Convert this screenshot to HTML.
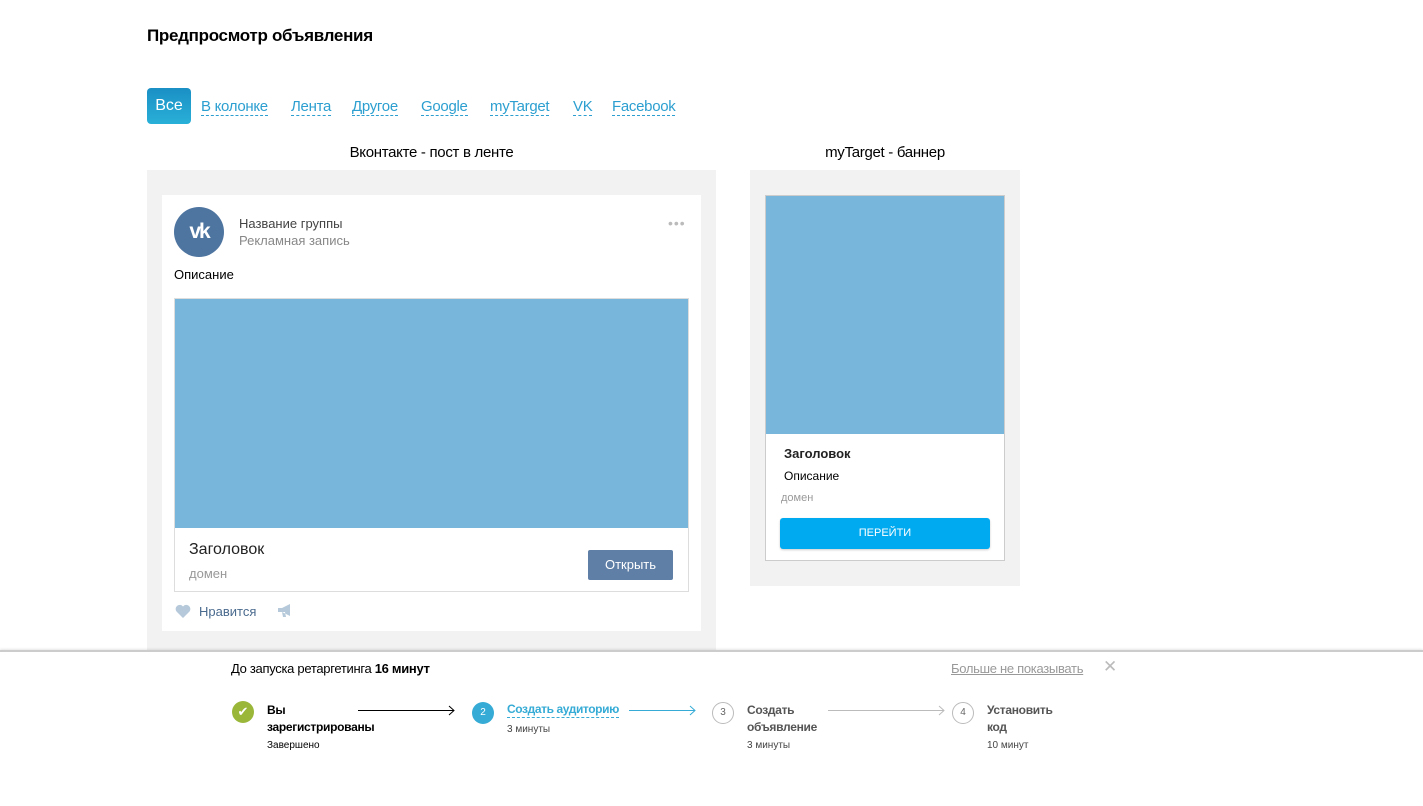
<!DOCTYPE html>
<html><head><meta charset="utf-8"><style>
*{margin:0;padding:0;box-sizing:border-box}
body{width:1423px;height:806px;background:#fff;font-family:"Liberation Sans","DejaVu Sans",sans-serif;position:relative;overflow:hidden;color:#000}
.a{position:absolute;white-space:nowrap}
.tab{position:absolute;top:98px;font-size:15px;color:#2c9fd0;border-bottom:1px dashed #2c9fd0;line-height:17px;letter-spacing:-0.3px}
</style></head><body>
<div class="a" style="left:147px;top:26px;font-size:17px;font-weight:bold;letter-spacing:-0.3px">Предпросмотр объявления</div>
<div class="a" style="left:147px;top:88px;width:44px;height:36px;border-radius:4px;background:linear-gradient(#1a8fc4,#29b0d8);color:#fff;font-size:16px;line-height:36px;text-align:center">Все</div>
<span class="tab" style="left:201px">В колонке</span>
<span class="tab" style="left:291px">Лента</span>
<span class="tab" style="left:352px">Другое</span>
<span class="tab" style="left:421px">Google</span>
<span class="tab" style="left:490px">myTarget</span>
<span class="tab" style="left:573px">VK</span>
<span class="tab" style="left:612px">Facebook</span>

<div class="a" style="left:147px;top:144px;width:569px;text-align:center;font-size:15px;letter-spacing:-0.3px">Вконтакте - пост в ленте</div>
<div class="a" style="left:147px;top:170px;width:569px;height:490px;background:#f2f2f2"></div>
<div class="a" style="left:162px;top:195px;width:539px;height:436px;background:#fff"></div>
<div class="a" style="left:174px;top:207px;width:50px;height:50px;border-radius:50%;background:#4e74a0;color:#fff;font-weight:bold;font-size:21px;text-align:center;line-height:50px;letter-spacing:-2px">vk</div>
<div class="a" style="left:239px;top:216px;font-size:13px;color:#444">Название группы</div>
<div class="a" style="left:239px;top:233px;font-size:13px;color:#888">Рекламная запись</div>
<div class="a" style="left:668px;top:215px;font-size:14px;color:#bbb;letter-spacing:1px">•••</div>
<div class="a" style="left:174px;top:267px;font-size:13px">Описание</div>
<div class="a" style="left:174px;top:298px;width:515px;height:294px;border:1px solid #ddd;background:#fff"></div>
<div class="a" style="left:175px;top:299px;width:513px;height:229px;background:#78b6dc"></div>
<div class="a" style="left:189px;top:541px;font-size:16px;color:#222">Заголовок</div>
<div class="a" style="left:189px;top:566px;font-size:13px;color:#999">домен</div>
<div class="a" style="left:588px;top:550px;width:85px;height:30px;background:#5f7fa6;border-radius:2px;color:#fff;font-size:13px;text-align:center;line-height:30px">Открыть</div>
<svg class="a" style="left:175px;top:604px" width="16" height="14" viewBox="0 0 16 14"><path d="M8 14L1.5 7.5A4 4 0 0 1 8 2.5A4 4 0 0 1 14.5 7.5z" fill="#b5c9da"/></svg>
<div class="a" style="left:199px;top:604px;font-size:13px;color:#4a6a8e">Нравится</div>
<svg class="a" style="left:277px;top:603px" width="16" height="15" viewBox="0 0 16 15"><path d="M1 5h4l8-4v12l-8-4H1z M5 9l1 5h3l-1-5z" fill="#b5c9da"/></svg>

<div class="a" style="left:750px;top:144px;width:270px;text-align:center;font-size:15px;letter-spacing:-0.3px">myTarget - баннер</div>
<div class="a" style="left:750px;top:170px;width:270px;height:416px;background:#f2f2f2"></div>
<div class="a" style="left:765px;top:195px;width:240px;height:366px;background:#fff;border:1px solid #ccc"></div>
<div class="a" style="left:766px;top:196px;width:238px;height:238px;background:#78b6dc"></div>
<div class="a" style="left:784px;top:446px;font-size:13px;font-weight:bold;color:#222">Заголовок</div>
<div class="a" style="left:784px;top:469px;font-size:12px">Описание</div>
<div class="a" style="left:781px;top:492px;font-size:11px;color:#999">домен</div>
<div class="a" style="left:780px;top:518px;width:210px;height:31px;background:#00aaf0;border-radius:3px;color:#fff;font-size:11px;text-align:center;line-height:31px;box-shadow:0 1px 2px rgba(0,0,0,.2)">ПЕРЕЙТИ</div>

<div class="a" style="left:0;top:650px;width:1423px;height:156px;background:#fff;border-top:2px solid #ccc;box-shadow:0 -1px 2px rgba(0,0,0,.1)"></div>
<div class="a" style="left:231px;top:661px;font-size:13px;letter-spacing:-0.3px">До запуска ретаргетинга <b>16 минут</b></div>
<div class="a" style="left:951px;top:661px;font-size:13px;color:#999;text-decoration:underline;letter-spacing:-0.3px">Больше не показывать</div>
<div class="a" style="left:1103px;top:657px;font-size:17px;color:#bbb">✕</div>

<div class="a" style="left:232px;top:701px;width:22px;height:22px;border-radius:50%;background:#9ab73a;color:#fff;font-size:13px;text-align:center;line-height:22px">✔</div>
<div class="a" style="left:267px;top:702px;font-size:12px;font-weight:bold;line-height:17px;letter-spacing:-0.3px">Вы<br>зарегистрированы</div>
<div class="a" style="left:267px;top:740px;font-size:10px">Завершено</div>
<svg class="a" style="left:358px;top:705px" width="98" height="11"><path d="M0 5.5H96M91 1l5 4.5-5 4.5" stroke="#000" fill="none"/></svg>

<div class="a" style="left:472px;top:702px;width:22px;height:22px;border-radius:50%;background:#35abd5;color:#fff;font-size:10px;text-align:center;line-height:22px">2</div>
<div class="a" style="left:507px;top:702px;font-size:12px;font-weight:bold;color:#35abd5;border-bottom:1px dashed #35abd5;line-height:15px;letter-spacing:-0.4px">Создать аудиторию</div>
<div class="a" style="left:507px;top:724px;font-size:10px;color:#444">3 минуты</div>
<svg class="a" style="left:629px;top:705px" width="68" height="11"><path d="M0 5.5H66M61 1l5 4.5-5 4.5" stroke="#35abd5" fill="none"/></svg>

<div class="a" style="left:712px;top:702px;width:22px;height:22px;border-radius:50%;border:1px solid #bbb;color:#666;font-size:10px;text-align:center;line-height:20px">3</div>
<div class="a" style="left:747px;top:702px;font-size:12px;font-weight:bold;color:#555;line-height:17px;letter-spacing:-0.3px">Создать<br>объявление</div>
<div class="a" style="left:747px;top:740px;font-size:10px;color:#444">3 минуты</div>
<svg class="a" style="left:828px;top:705px" width="118" height="11"><path d="M0 5.5H116M111 1l5 4.5-5 4.5" stroke="#bbb" fill="none"/></svg>

<div class="a" style="left:952px;top:702px;width:22px;height:22px;border-radius:50%;border:1px solid #bbb;color:#666;font-size:10px;text-align:center;line-height:20px">4</div>
<div class="a" style="left:987px;top:702px;font-size:12px;font-weight:bold;color:#555;line-height:17px;letter-spacing:-0.3px">Установить<br>код</div>
<div class="a" style="left:987px;top:740px;font-size:10px;color:#444">10 минут</div>
</body></html>
